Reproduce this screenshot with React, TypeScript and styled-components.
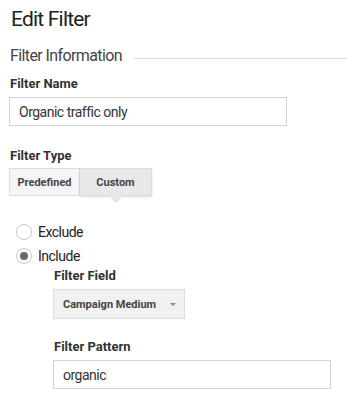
import styled, { createGlobalStyle } from "styled-components";

const Global = createGlobalStyle`
  body {
    margin: 0;
    background: #fff;
    font-family: Roboto, "Liberation Sans", sans-serif;
    color: #222;
  }
`

const Page = styled.div`
  padding: 4px 0 0 9px;
`
const Title = styled.h1`
  margin: 0;
  padding-left: 2px;
  font-size: 21px;
  font-weight: 400;
  letter-spacing: -0.8px;
  line-height: 30px;
  color: #212121;
`
const Section = styled.div`
  display: flex;
  align-items: center;
  gap: 12px;
  margin-top: 11px;
  padding-left: 1px;
  font-size: 16px;
  letter-spacing: -0.6px;
  color: #444;
  line-height: 22px;
  &::after {
    content: '';
    flex: 1;
    height: 1px;
    margin-top: 4px;
    background: #ddd;
  }
`
const Label = styled.div<{ $top?: number }>`
  margin-top: ${({ $top }) => $top ?? 0}px;
  padding-left: 1px;
  font-size: 13px;
  font-weight: 700;
  line-height: 16px;
  color: #333;
`
const TextInput = styled.div<{ $width: number }>`
  box-sizing: border-box;
  width: ${({ $width }) => $width}px;
  height: 29px;
  margin-top: 5px;
  padding: 0 9px;
  border: 1px solid #d4d4d4;
  display: flex;
  align-items: center;
  font-size: 14px;
  letter-spacing: -0.5px;
  color: #333;
`
const Segmented = styled.div`
  display: flex;
  margin-top: 4px;
`
const Segment = styled.div<{ $active?: boolean }>`
  position: relative;
  box-sizing: border-box;
  width: ${({ $active }) => ($active ? 72 : 71)}px;
  height: 28px;
  display: flex;
  align-items: center;
  justify-content: center;
  font-size: 11px;
  font-weight: 700;
  color: #444;
  background: ${({ $active }) => ($active ? '#e8e8e8' : '#f5f5f5')};
  border: 1px solid #dcdcdc;
  & + & {
    border-left: none;
  }
  ${({ $active }) => $active && `
    box-shadow: 0 1px 2px rgba(0,0,0,.15);
    &::after {
      content: '';
      position: absolute;
      left: 50%;
      bottom: -7px;
      margin-left: -7px;
      border: 7px solid transparent;
      border-bottom: none;
      border-top-color: #e8e8e8;
      filter: drop-shadow(0 1px 0 #ddd);
    }
  `}
`
const RadioList = styled.div`
  display: flex;
  flex-direction: column;
  gap: 8px;
  margin-top: 28px;
  padding-left: 7px;
`
const RadioRow = styled.div`
  display: flex;
  align-items: center;
  gap: 6px;
  height: 16px;
  font-size: 14px;
  letter-spacing: -0.5px;
  color: #222;
`
const Radio = styled.span<{ $checked?: boolean }>`
  box-sizing: border-box;
  width: 16px;
  height: 16px;
  border-radius: 50%;
  border: 1px solid #c8c8c8;
  display: flex;
  align-items: center;
  justify-content: center;
  &::after {
    content: '';
    width: 8px;
    height: 8px;
    border-radius: 50%;
    background: ${({ $checked }) => ($checked ? '#666' : 'transparent')};
  }
`
const Nested = styled.div`
  padding-left: 44px;
  margin-top: 4px;
`
const Dropdown = styled.div`
  box-sizing: border-box;
  width: 132px;
  height: 30px;
  margin-top: 5px;
  padding: 0 8px 0 9px;
  display: flex;
  align-items: center;
  justify-content: space-between;
  background: #f1f1f1;
  border: 1px solid #dcdcdc;
  font-size: 11px;
  font-weight: 700;
  color: #444;
  &::after {
    content: '';
    border: 3px solid transparent;
    border-bottom: none;
    border-top-color: #888;
  }
`

export default function App() {
  return (
    <Page>
      <Global />
      <Title>Edit Filter</Title>
      <Section>Filter Information</Section>
      <Label $top={9}>Filter Name</Label>
      <TextInput $width={278}>Organic traffic only</TextInput>
      <Label $top={22}>Filter Type</Label>
      <Segmented>
        <Segment>Predefined</Segment>
        <Segment $active>Custom</Segment>
      </Segmented>
      <RadioList>
        <RadioRow><Radio />Exclude</RadioRow>
        <RadioRow><Radio $checked />Include</RadioRow>
      </RadioList>
      <Nested>
        <Label>Filter Field</Label>
        <Dropdown>Campaign Medium</Dropdown>
        <Label $top={20}>Filter Pattern</Label>
        <TextInput $width={278}>organic</TextInput>
      </Nested>
    </Page>
  );
}
